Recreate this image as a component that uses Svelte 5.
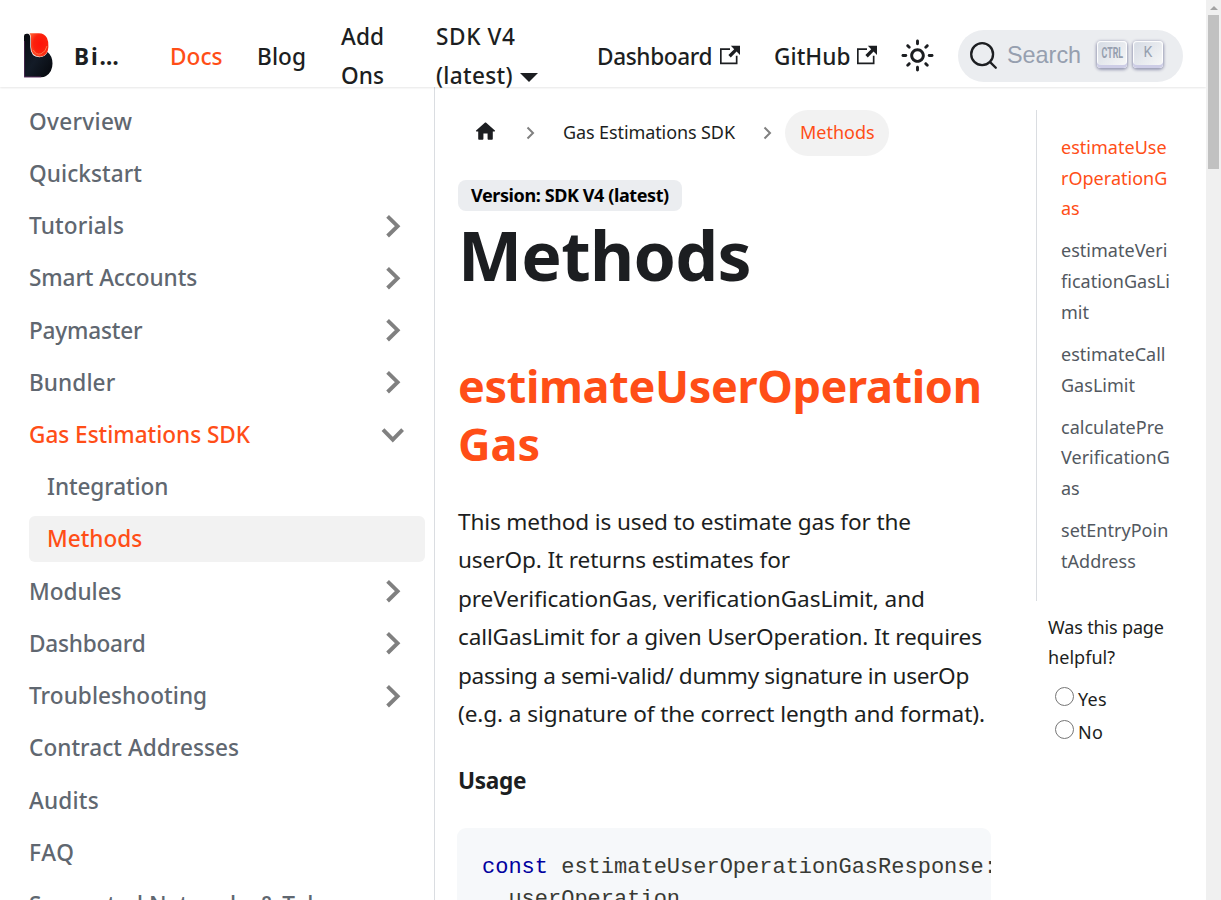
<script>
  const menu = [
    { t: 'Overview', ls: 0.3 },
    { t: 'Quickstart', ls: 0.05 },
    { t: 'Tutorials', ls: 0.15, c: 'chev' },
    { t: 'Smart Accounts', ls: -0.11, c: 'chev' },
    { t: 'Paymaster', ls: -0.18, c: 'chev' },
    { t: 'Bundler', ls: 0.08, c: 'chev' },
    { t: 'Gas Estimations SDK', ls: -0.03, c: 'down', on: true },
    { t: 'Integration', ls: -0.12, sub: true },
    { t: 'Methods', ls: -0.03, sub: true, on: true, fill: true },
    { t: 'Modules', ls: -0.03, c: 'chev' },
    { t: 'Dashboard', ls: -0.22, c: 'chev' },
    { t: 'Troubleshooting', ls: 0.05, c: 'chev' },
    { t: 'Contract Addresses', ls: 0.03 },
    { t: 'Audits', ls: 0.2 },
    { t: 'FAQ', ls: 0.7 },
    { t: 'Supported Networks & Tokens', ls: 0.05 }
  ];
  const toc = [
    { on: true, lines: ['estimateUse', 'rOperationG', 'as'] },
    { lines: ['estimateVeri', 'ficationGasLi', 'mit'] },
    { lines: ['estimateCall', 'GasLimit'] },
    { lines: ['calculatePre', 'VerificationG', 'as'] },
    { lines: ['setEntryPoin', 'tAddress'] }
  ];
  const para = [
    { t: 'This method is used to estimate gas for the', ls: -0.14 },
    { t: 'userOp. It returns estimates for', ls: -0.11 },
    { t: 'preVerificationGas, verificationGasLimit, and', ls: -0.08 },
    { t: 'callGasLimit for a given UserOperation. It requires', ls: -0.14 },
    { t: 'passing a semi-valid/ dummy signature in userOp', ls: -0.33 },
    { t: '(e.g. a signature of the correct length and format).', ls: -0.09 }
  ];
</script>

{#snippet ext()}
  <svg class="ext" width="20" height="20" viewBox="0 0 24 24"><path fill="currentColor" d="M21 13v10h-21v-19h12v2h-10v15h17v-8h2zm3-12h-10.988l4.035 4-6.977 7.07 2.828 2.828 6.977-7.07 4.125 4.172v-11z" /></svg>
{/snippet}
{#snippet crumbSep()}
  <svg class="sep" width="10" height="14" viewBox="0 0 10 14"><path d="M1.5 1.5L7 7L1.5 12.5" fill="none" stroke="#808080" stroke-width="2" /></svg>
{/snippet}

<div class="page">
  <div class="view">
    <header>
      <svg class="logo" width="29" height="45" viewBox="0 0 29 45">
        <defs>
          <linearGradient id="body" x1="0" y1="0" x2="1" y2="1"><stop offset="0" stop-color="#090b10" /><stop offset=".5" stop-color="#131b27" /><stop offset="1" stop-color="#05070b" /></linearGradient>
          <radialGradient id="drop" cx=".6" cy=".45" r=".7"><stop offset="0" stop-color="#ff1208" /><stop offset=".55" stop-color="#fb210d" /><stop offset="1" stop-color="#ff6535" /></radialGradient>
        </defs>
        <path d="M0 3Q0 .8 2.5 .8H4Q6.3 1.2 6.3 6V14Q6.6 24 15.5 24.3Q21.5 24 23.5 19Q28.5 23 28.5 30.5Q28.5 39 22 43Q20 44.2 17 44.2H0Z" fill="url(#body)" />
        <path d="M.2 8V44H17" fill="none" stroke="#8b3d86" stroke-width=".6" />
        <path d="M5.5.3H15Q20.5 .3 23 5Q24.7 8.5 24.4 14Q23.9 23.4 16 23.8Q7.2 23.5 7 14V7Q7 2 5.5.3Z" fill="url(#drop)" />
        <path d="M9.3 17Q12 22.5 17 20.8Q22 18.6 23 13" fill="none" stroke="#ff7448" stroke-width="1" />
      </svg>
      <b class="brand">Bi…</b>
      <a class="docs on">Docs</a>
      <a class="blog">Blog</a>
      <a class="addons">Add<br />Ons</a>
      <a class="sdk"><span class="l1">SDK V4</span><br /><span class="l2">(latest)</span><i class="caret"></i></a>
      <a class="dash"><span>Dashboard</span>{@render ext()}</a>
      <a class="git"><span>GitHub</span>{@render ext()}</a>
      <svg class="sun" width="35" height="35" viewBox="0 0 24 24"><path fill="currentColor" d="M12,9c1.65,0,3,1.35,3,3s-1.35,3-3,3s-3-1.35-3-3S10.35,9,12,9 M12,7c-2.76,0-5,2.24-5,5s2.24,5,5,5s5-2.24,5-5 S14.76,7,12,7L12,7z M2,13l2,0c0.55,0,1-0.45,1-1s-0.45-1-1-1l-2,0c-0.55,0-1,0.45-1,1S1.45,13,2,13z M20,13l2,0c0.55,0,1-0.45,1-1 s-0.45-1-1-1l-2,0c-0.55,0-1,0.45-1,1S19.45,13,20,13z M11,2v2c0,0.55,0.45,1,1,1s1-0.45,1-1V2c0-0.55-0.45-1-1-1S11,1.45,11,2z M11,20v2c0,0.55,0.45,1,1,1s1-0.45,1-1v-2c0-0.55-0.45-1-1-1C11.45,19,11,19.45,11,20z M5.99,4.58c-0.39-0.39-1.03-0.39-1.41,0 c-0.39,0.39-0.39,1.03,0,1.41l1.06,1.06c0.39,0.39,1.03,0.39,1.41,0s0.39-1.03,0-1.41L5.99,4.58z M18.36,16.95 c-0.39-0.39-1.03-0.39-1.41,0c-0.39,0.39-0.39,1.03,0,1.41l1.06,1.06c0.39,0.39,1.03,0.39,1.41,0c0.39-0.39,0.39-1.03,0-1.41 L18.36,16.95z M19.42,5.99c0.39-0.39,0.39-1.03,0-1.41c-0.39-0.39-1.03-0.39-1.41,0l-1.06,1.06c-0.39,0.39-0.39,1.03,0,1.41 s1.03,0.39,1.41,0L19.42,5.99z M7.05,18.36c0.39-0.39,0.39-1.03,0-1.41c-0.39-0.39-1.03-0.39-1.41,0l-1.06,1.06 c-0.39,0.39-0.39,1.03,0,1.41s1.03,0.39,1.41,0L7.05,18.36z" /></svg>
      <button class="search">
        <svg width="29" height="29" viewBox="0 0 20 20"><path d="M14.386 14.386l4.0877 4.0877-4.0877-4.0877c-2.9418 2.9419-7.7115 2.9419-10.6533 0-2.9419-2.9418-2.9419-7.7115 0-10.6533 2.9418-2.9419 7.7115-2.9419 10.6533 0 2.9419 2.9418 2.9419 7.7115 0 10.6533z" stroke="#1c1e21" stroke-width="1.6" fill="none" stroke-linecap="round" stroke-linejoin="round" /></svg>
        <span class="ph">Search</span>
        <kbd class="ctrl"><span>CTRL</span></kbd>
        <kbd class="k">K</kbd>
      </button>
    </header>

    <div class="cols">
      <aside class="side">
        {#each menu as m}
          <div class="item" class:on={m.on} class:sub={m.sub} class:fill={m.fill}>
            <span style="letter-spacing:{m.ls}px">{m.t}</span>
            {#if m.c}
              <svg class={m.c} width="24" height="24" viewBox="0 0 24 24"><path d="M6.6 2.4L16.6 12.2L6.6 22" fill="none" stroke="#808080" stroke-width="3.9" /></svg>
            {/if}
          </div>
        {/each}
      </aside>

      <main>
        <nav>
          <svg class="home" width="25" height="25" viewBox="0 0 24 24"><path d="M10 19v-5h4v5c0 .55.45 1 1 1h3c.55 0 1-.45 1-1v-7h1.7c.46 0 .68-.57.33-.87L12.67 3.6c-.38-.34-.96-.34-1.34 0l-8.36 7.53c-.34.3-.13.87.33.87H5v7c0 .55.45 1 1 1h3c.55 0 1-.45 1-1z" fill="currentColor" /></svg>
          {@render crumbSep()}
          <span class="crumb">Gas Estimations SDK</span>
          {@render crumbSep()}
          <span class="pill">Methods</span>
        </nav>
        <div><span class="badge">Version: SDK V4 (latest)</span></div>
        <h1>Methods</h1>
        <h2><span>estimateUserOperation</span><br />Gas</h2>
        <p>{#each para as l}<span style="letter-spacing:{l.ls}px">{l.t}</span>{/each}</p>
        <h3>Usage</h3>
        <pre><span class="kw">const</span> estimateUserOperationGasResponse: UserOpGasResponse{'\n'}  userOperation</pre>
      </main>

      <aside class="rail">
        <ul>
          {#each toc as e}
            <li class:on={e.on}>{#each e.lines as l}<span>{l}</span>{/each}</li>
          {/each}
        </ul>
        <div class="ask"><span>Was this page</span><span class="hf">helpful?</span></div>
        <label><i></i>Yes</label>
        <label><i></i>No</label>
      </aside>
    </div>
  </div>
  <div class="scroll"><i class="up"></i><div class="thumb"></div></div>
</div>

<style>
  :global(body) { overflow: hidden; background: #fff; }
  .page { display: flex; width: 1221px; height: 900px; overflow: hidden; font-family: "Noto Sans", sans-serif; font-size: 22.6px; color: #1c1e21; }
  .page * { box-sizing: border-box; }
  .view { width: 1206px; height: 900px; flex: none; display: flex; flex-direction: column; overflow: hidden; }
  header { height: 87px; flex: none; padding: 24px 0 0 24px; display: flex; align-items: center; box-shadow: 0 1px 2px rgba(0, 0, 0, .1); position: relative; z-index: 2; line-height: 39px; font-weight: 500; white-space: nowrap; }
  header > * { flex: none; }
  .logo { margin-right: 21px; }
  .brand { width: 96px; font-weight: 700; letter-spacing: 1.9px; }
  .docs { width: 87px; letter-spacing: .05px; }
  .blog { width: 84px; letter-spacing: .1px; }
  .brand, .docs, .blog { padding-top: 2px; }
  .addons { width: 95px; letter-spacing: .1px; }
  .sdk { width: 161px; }
  .l1 { letter-spacing: .6px; }
  .l2 { letter-spacing: .3px; }
  .dash, .git { display: flex; align-items: center; }
  .dash { width: 177px; letter-spacing: -.36px; }
  .dash span { width: 122.5px; padding-top: 2px; }
  .git { width: 126px; letter-spacing: .05px; }
  .git span { width: 82.5px; padding-top: 2px; }
  .ext { position: relative; top: -1px; }
  .on { color: #ff4e17; }
  .caret { display: inline-block; margin-left: 7px; border: 9px solid transparent; border-top-color: #1c1e21; border-bottom: 0; vertical-align: 2px; }
  .sun { margin-right: 23px; }
  .search { width: 225px; height: 52px; border: 0; border-radius: 26px; background: #ebedf0; padding: 0 0 0 11px; display: flex; align-items: center; color: #969faf; }
  .ph { font: 23.4px "Liberation Sans", sans-serif; width: 90px; margin-left: 9px; text-align: left; padding-bottom: 1px; }
  kbd { width: 30px; height: 27px; flex: none; margin-right: 6px; margin-top: -3px; border-radius: 4px; background: linear-gradient(-225deg, #d5dbe4, #f8f8f8); box-shadow: inset 0 -3px 0 #cdcde6, inset 0 0 1px 1px #fff, 0 1px 3px 1px rgba(30, 35, 90, .4); display: flex; align-items: center; justify-content: center; padding-bottom: 3px; }
  .ctrl { font: 700 15px Roboto, sans-serif; }
  .ctrl span { transform: scaleX(.59); }
  .k { font: 14px Roboto, sans-serif; padding-bottom: 4px; }

  .cols { display: flex; flex: 1; min-height: 0; }
  .side { width: 435px; flex: none; border-right: 1px solid #dadde1; padding: 11.2px 9px 0 29px; color: #606770; font-weight: 500; overflow: hidden; }
  .item { height: 46px; margin-bottom: 6.23px; display: flex; align-items: center; justify-content: space-between; padding-right: 20px; border-radius: 6px; white-space: nowrap; }
  .item.sub { padding-left: 18px; }
  .item.fill { background: #f2f2f2; }
  .item.on { color: #ff4e17; }
  .down { transform: rotate(90deg); }

  main { width: 601px; flex: none; padding: 23px 0 0 23px; overflow: hidden; }
  nav { height: 46px; display: flex; align-items: center; font-size: 18px; padding-left: 15px; }
  .home { margin: -4px 28px 0 0; }
  .crumb { width: 200px; margin: -2px 0 0 27px; letter-spacing: -.1px; }
  .pill { margin-left: 12px; width: 104px; height: 46px; line-height: 45px; padding: 0 15px; border-radius: 23px; background: #f2f2f2; color: #ff4e17; }
  .badge { display: block; width: 224px; height: 31px; margin-top: 24px; border-radius: 8px; background: #ebedf0; color: #000; font-size: 18px; font-weight: 700; line-height: 30px; padding-left: 13px; letter-spacing: -.4px; white-space: nowrap; }
  h1 { margin: 0; height: 92px; font-size: 68px; line-height: 88px; letter-spacing: -.75px; }
  h2 { margin: 54px 0 0; font-size: 45px; line-height: 58px; color: #ff4e17; }
  h2 span { letter-spacing: -.34px; }
  p { margin: 30px 0 0; line-height: 38.4px; }
  p span { display: block; white-space: nowrap; }
  h3 { margin: 29px 0 0; font-size: 22.6px; line-height: 38px; letter-spacing: -.3px; }
  pre { margin: 28px 0 0 -1px; width: 534px; height: 130px; border-radius: 9px; background: #f6f8fa; color: #393a34; padding: 24px 0 0 25px; font: 22px/32px "Liberation Mono", monospace; overflow: hidden; }
  .kw { color: #00009f; }

  .rail { flex: 1; padding-top: 23px; font-size: 18px; line-height: 30.6px; }
  ul { list-style: none; margin: 0; padding: 22px 0 0 24px; height: 491px; border-left: 1px solid #dadde1; color: #525860; }
  li { margin-bottom: 11.7px; letter-spacing: .02px; }
  li.on { color: #ff4e17; }
  li span, .ask span { display: block; white-space: nowrap; }
  .ask { padding: 11px 0 11px 12px; line-height: 30px; letter-spacing: -.15px; }
  .ask .hf { letter-spacing: .05px; }
  label { display: flex; align-items: center; height: 33px; padding-left: 19px; letter-spacing: .3px; }
  label i { width: 19px; height: 19px; border: 1.3px solid #767676; border-radius: 50%; margin: -6px 4px 0 0; }

  .scroll { width: 15px; background: #f0f0f0; display: flex; flex-direction: column; align-items: center; }
  .up { border: 4px solid transparent; border-bottom-color: #a3a3a3; border-top: 0; margin: 6px 0 5px; }
  .thumb { width: 11px; height: 154px; background: #c1c1c1; }
</style>
